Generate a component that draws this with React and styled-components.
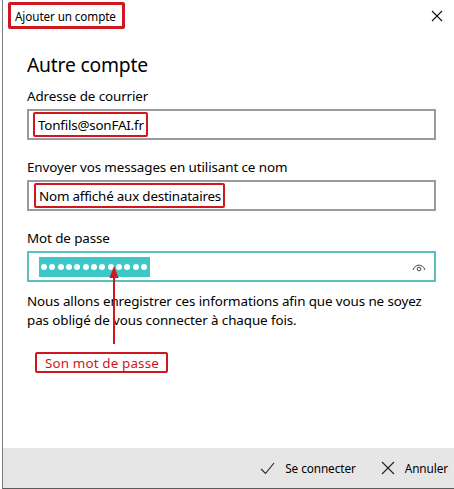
import React from "react";
import styled, { createGlobalStyle } from "styled-components";

const GlobalStyle = createGlobalStyle`
  html, body { margin: 0; padding: 0; background: #ffffff; }
  body { font-family: "Noto Sans", "Open Sans", sans-serif; color: #000; }
`;

const RED = "#d0161f";

const Page = styled.div`
  width: 454px;
  height: 489px;
  padding-left: 2px;
  box-sizing: border-box;
  overflow: hidden;
`;

const Window = styled.div`
  position: relative;
  height: 100%;
  border-left: 1px solid #7c7c7c;
  border-bottom: 1px solid #5a5a5a;
  box-sizing: border-box;
  display: flex;
  flex-direction: column;
  background: #fff;
`;

const Header = styled.div`
  height: 32px;
  display: flex;
  align-items: flex-start;
  justify-content: space-between;
  padding: 2px 11px 0 5px;
  box-sizing: border-box;
`;

const TitleBox = styled.div`
  border: 3px solid ${RED};
  border-radius: 2px;
  height: 27px;
  box-sizing: border-box;
  padding: 0 6px 0 4px;
  display: flex;
  align-items: center;
  font-size: 11.7px;
  letter-spacing: -0.1px;
`;

const CloseButton = styled.div`
  width: 12px;
  height: 12px;
  margin-top: 8px;
  display: flex;
`;

const Content = styled.div`
  flex: 1;
  padding: 19px 18px 0 24px;
  display: flex;
  flex-direction: column;
`;

const Heading = styled.h1`
  margin: 0;
  font-size: 19.3px;
  font-weight: 400;
  line-height: 28px;
  letter-spacing: -0.2px;
`;

const Label = styled.div`
  font-size: 13.4px;
  line-height: 20px;
  margin-top: ${(p) => p.$top}px;
  letter-spacing: -0.1px;
`;

const Input = styled.div`
  margin-top: 3px;
  height: 31px;
  box-sizing: border-box;
  border: 2px solid ${(p) => (p.$focus ? "#5cbfbf" : "#9a9a9a")};
  display: flex;
  align-items: center;
  padding: 0 8px 0 ${(p) => p.$pad}px;
  font-size: 13.4px;
`;

const Highlight = styled.div`
  border: 2px solid ${RED};
  border-radius: 2px;
  height: 25px;
  box-sizing: border-box;
  padding: 0 2px 0 3px;
  display: flex;
  align-items: center;
  letter-spacing: -0.2px;
`;

const Selection = styled.div`
  background: #3ec7c7;
  height: 20px;
  width: 111px;
  display: flex;
  align-items: center;
  justify-content: space-between;
  padding: 0 3px 0 2px;
  box-sizing: border-box;
  color: #fff;
`;

const Dot = styled.span`
  width: 6px;
  height: 6px;
  border-radius: 50%;
  background: #fff;
`;

const EyeButton = styled.div`
  margin-left: auto;
  display: flex;
`;

const Paragraph = styled.p`
  margin: 10px 0 0;
  font-size: 13.4px;
  line-height: 19px;
  letter-spacing: -0.1px;
`;

const Annotation = styled.div`
  align-self: flex-start;
  margin: 22px 0 0 8px;
  border: 2px solid ${RED};
  border-radius: 2px;
  height: 21px;
  box-sizing: border-box;
  padding: 0 7px 0 8px;
  display: flex;
  align-items: center;
  color: ${RED};
  font-size: 13.4px;
  letter-spacing: 0.15px;
`;

const Arrow = styled.svg`
  position: absolute;
  left: 103px;
  top: 266px;
`;

const Footer = styled.div`
  height: 40px;
  background: #e6e6e6;
  display: flex;
  justify-content: flex-end;
  align-items: center;
  gap: 25px;
  padding-right: 6px;
`;

const FooterButton = styled.div`
  display: flex;
  align-items: center;
  gap: 10px;
  font-size: 11.8px;
  letter-spacing: -0.1px;
`;

const dots = Array.from({ length: 13 });

export default function App() {
  return (
    <>
      <GlobalStyle />
      <Page>
        <Window>
          <Header>
            <TitleBox>Ajouter un compte</TitleBox>
            <CloseButton>
              <svg width="12" height="12" viewBox="0 0 12 12">
                <path d="M1 1 L11 11 M11 1 L1 11" stroke="#111" strokeWidth="1.1" />
              </svg>
            </CloseButton>
          </Header>
          <Content>
            <Heading>Autre compte</Heading>
            <Label $top={7}>Adresse de courrier</Label>
            <Input $pad={4}>
              <Highlight>Tonfils@sonFAI.fr</Highlight>
            </Input>
            <Label $top={17}>Envoyer vos messages en utilisant ce nom</Label>
            <Input $pad={5}>
              <Highlight>Nom affiché aux destinataires</Highlight>
            </Input>
            <Label $top={17}>Mot de passe</Label>
            <Input $focus $pad={10}>
              <Selection>
                {dots.map((_, i) => (
                  <Dot key={i} />
                ))}
              </Selection>
              <EyeButton>
                <svg width="14" height="10" viewBox="0 0 14 10">
                  <path d="M1 8 C3 1.5 11 1.5 13 8" fill="none" stroke="#444" strokeWidth="1" />
                  <circle cx="7" cy="7" r="1.8" fill="none" stroke="#444" strokeWidth="1" />
                </svg>
              </EyeButton>
            </Input>
            <Paragraph>
              Nous allons enregistrer ces informations afin que vous ne soyez pas obligé de vous connecter à chaque fois.
            </Paragraph>
            <Annotation>Son mot de passe</Annotation>
          </Content>
          <Arrow width="16" height="78" viewBox="0 0 16 78">
            <path d="M8 10 L8 78" stroke={RED} strokeWidth="2" />
            <path d="M8 0 L3.5 12 L12.5 12 Z" fill={RED} />
          </Arrow>
          <Footer>
            <FooterButton>
              <svg width="15" height="13" viewBox="0 0 15 13">
                <path d="M1 7 L5.5 11.5 L14 1" fill="none" stroke="#222" strokeWidth="1.1" />
              </svg>
              Se connecter
            </FooterButton>
            <FooterButton>
              <svg width="14" height="14" viewBox="0 0 14 14">
                <path d="M1 1 L13 13 M13 1 L1 13" stroke="#222" strokeWidth="1.1" />
              </svg>
              Annuler
            </FooterButton>
          </Footer>
        </Window>
      </Page>
    </>
  );
}
